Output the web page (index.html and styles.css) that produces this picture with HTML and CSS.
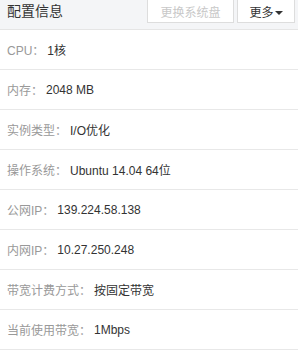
FILE: index.html
```html
<!DOCTYPE html>
<html lang="zh">
<head>
    <meta charset="UTF-8">
    <title>配置信息</title>
    <link rel="stylesheet" href="styles.css">
</head>
<body>
    <div class="panel">
        <div class="panel-head">
            <span class="panel-title">配置信息</span>
            <div class="head-btns">
                <button class="btn btn-disabled">更换系统盘</button>
                <button class="btn">更多<span class="caret"></span></button>
            </div>
        </div>
        <ul class="info-list">
            <li><span class="label">CPU：</span><span class="value">1核</span></li>
            <li><span class="label">内存：</span><span class="value">2048 MB</span></li>
            <li><span class="label">实例类型：</span><span class="value">I/O优化</span></li>
            <li><span class="label">操作系统：</span><span class="value">Ubuntu 14.04 64位</span></li>
            <li><span class="label">公网IP：</span><span class="value">139.224.58.138</span></li>
            <li><span class="label">内网IP：</span><span class="value">10.27.250.248</span></li>
            <li><span class="label">带宽计费方式：</span><span class="value">按固定带宽</span></li>
            <li><span class="label">当前使用带宽：</span><span class="value">1Mbps</span></li>
        </ul>
    </div>
</body>
</html>
```

FILE: styles.css
```css
body { margin: 0; background: #fff; font-family: "Liberation Sans", "Noto Sans CJK SC", sans-serif; font-size: 12px; color: #333; }
.panel { width: 298px; }
.panel-head { height: 29px; background: #f4f5f7; border-bottom: 1px solid #e5e5e5; display: flex; justify-content: space-between; align-items: flex-start; padding-left: 7px; }
.panel-title { font-size: 14px; line-height: 22px; color: #333; }
.head-btns { display: flex; gap: 3px; margin-top: -1px; padding-right: 3px; }
.btn { height: 24px; background: #fff; border: 1px solid #ddd; color: #333; font-family: inherit; font-size: 12px; padding: 0; cursor: pointer; }
.btn-disabled { width: 87px; color: #c8c8c8; cursor: default; }
.btn + .btn { width: 58px; }
.caret { display: inline-block; width: 0; height: 0; border-left: 4px solid transparent; border-right: 4px solid transparent; border-top: 4px solid #333; vertical-align: middle; margin-left: 1px; }
.info-list { list-style: none; margin: 0; padding: 0; }
.info-list li { height: 39px; border-bottom: 1px solid #e8e8e8; display: flex; align-items: center; padding-left: 7px; }
.label { color: #999; margin-right: 3px; }
.value { color: #333; }
```
